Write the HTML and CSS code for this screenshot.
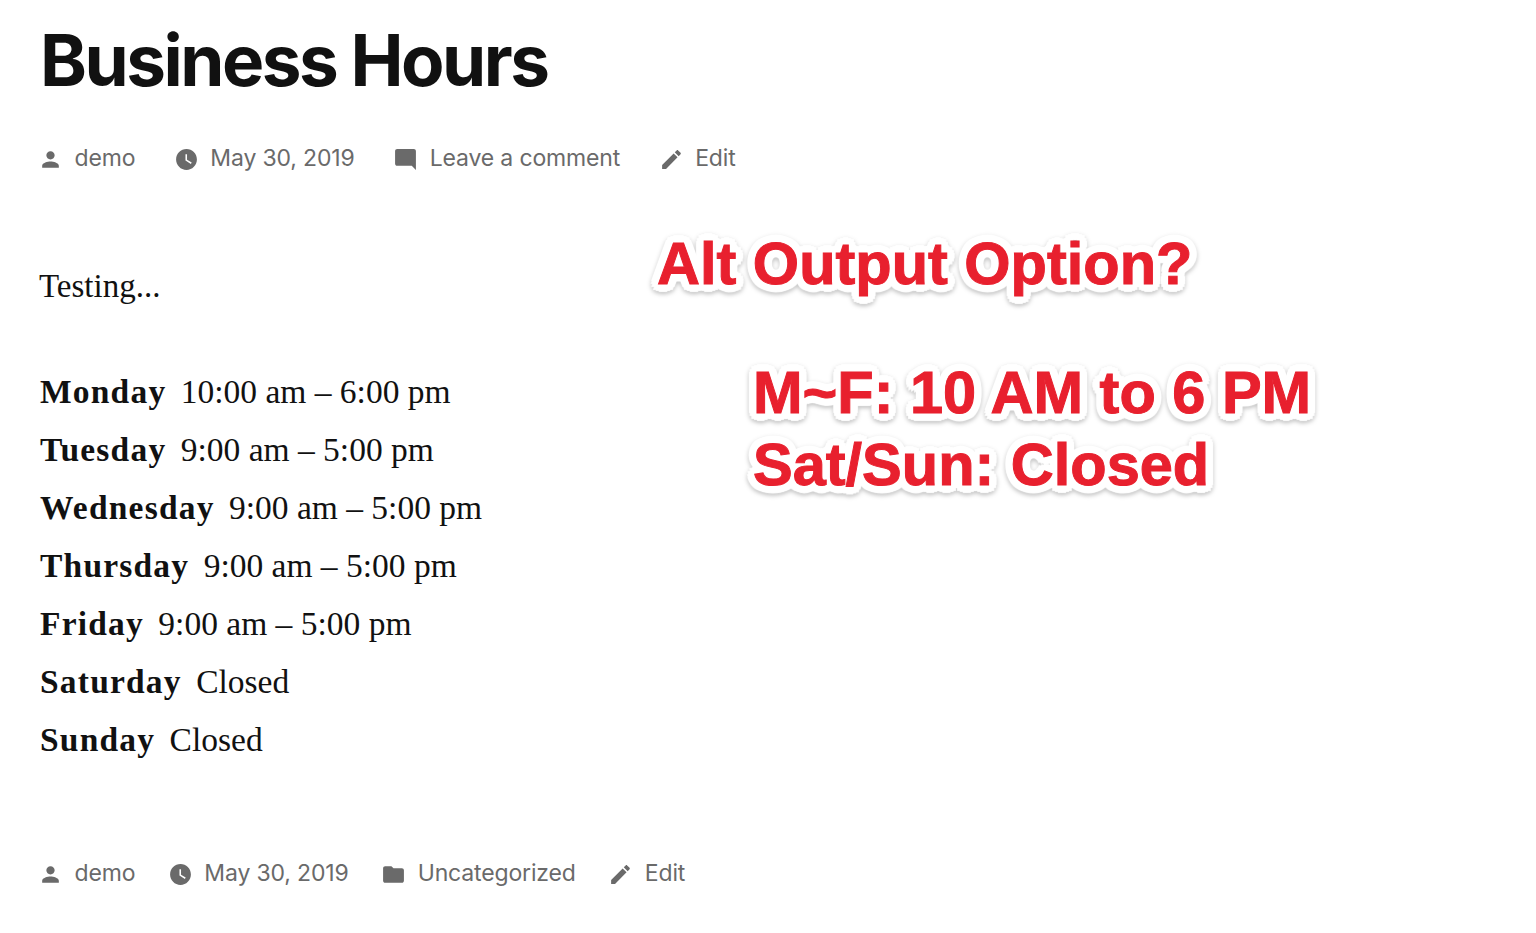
FILE: index.html
```html
<!DOCTYPE html>
<html lang="en">
<head>
    <meta charset="UTF-8">
    <meta name="viewport" content="width=device-width, initial-scale=1.0">
    <title>Business Hours</title>
    <link rel="stylesheet" href="styles.css">
</head>
<body>
    <article class="post">
        <h1 class="post-title">Business Hours</h1>

        <!-- Post meta -->
        <div class="meta meta-top">
            <span class="meta-item">
                <svg class="icon" viewBox="0 0 24 24"><path d="M12 12c2.21 0 4-1.79 4-4s-1.79-4-4-4-4 1.79-4 4 1.79 4 4 4zm0 2c-2.67 0-8 1.34-8 4v2h16v-2c0-2.66-5.33-4-8-4z"/></svg>
                demo
            </span>
            <span class="meta-item">
                <svg class="icon" viewBox="0 0 24 24"><path d="M12 2C6.5 2 2 6.5 2 12s4.5 10 10 10 10-4.5 10-10S17.5 2 12 2zm4.2 14.2L11 13V7h1.5v5.2l4.5 2.7-.8 1.3z"/></svg>
                May 30, 2019
            </span>
            <span class="meta-item">
                <svg class="icon" viewBox="0 0 24 24"><path d="M21.99 4c0-1.1-.89-2-1.99-2H4c-1.1 0-2 .9-2 2v12c0 1.1.9 2 2 2h14l4 4-.01-18z"/></svg>
                Leave a comment
            </span>
            <span class="meta-item">
                <svg class="icon" viewBox="0 0 24 24"><path d="M3 17.25V21h3.75L17.81 9.94l-3.75-3.75L3 17.25zM20.71 7.04c.39-.39.39-1.02 0-1.41l-2.34-2.34c-.39-.39-1.02-.39-1.41 0l-1.83 1.83 3.75 3.75 1.83-1.83z"/></svg>
                Edit
            </span>
        </div>

        <div class="post-content">
            <p class="intro">Testing...</p>
            <ul class="hours">
                <li><strong>Monday</strong> 10:00 am – 6:00 pm</li>
                <li><strong>Tuesday</strong> 9:00 am – 5:00 pm</li>
                <li><strong>Wednesday</strong> 9:00 am – 5:00 pm</li>
                <li><strong>Thursday</strong> 9:00 am – 5:00 pm</li>
                <li><strong>Friday</strong> 9:00 am – 5:00 pm</li>
                <li><strong>Saturday</strong> Closed</li>
                <li><strong>Sunday</strong> Closed</li>
            </ul>
        </div>

        <div class="meta meta-bottom">
            <span class="meta-item">
                <svg class="icon" viewBox="0 0 24 24"><path d="M12 12c2.21 0 4-1.79 4-4s-1.79-4-4-4-4 1.79-4 4 1.79 4 4 4zm0 2c-2.67 0-8 1.34-8 4v2h16v-2c0-2.66-5.33-4-8-4z"/></svg>
                demo
            </span>
            <span class="meta-item">
                <svg class="icon" viewBox="0 0 24 24"><path d="M12 2C6.5 2 2 6.5 2 12s4.5 10 10 10 10-4.5 10-10S17.5 2 12 2zm4.2 14.2L11 13V7h1.5v5.2l4.5 2.7-.8 1.3z"/></svg>
                May 30, 2019
            </span>
            <span class="meta-item">
                <svg class="icon" viewBox="0 0 24 24"><path d="M10 4H4c-1.1 0-1.99.9-1.99 2L2 18c0 1.1.9 2 2 2h16c1.1 0 2-.9 2-2V8c0-1.1-.9-2-2-2h-8l-2-2z"/></svg>
                Uncategorized
            </span>
            <span class="meta-item">
                <svg class="icon" viewBox="0 0 24 24"><path d="M3 17.25V21h3.75L17.81 9.94l-3.75-3.75L3 17.25zM20.71 7.04c.39-.39.39-1.02 0-1.41l-2.34-2.34c-.39-.39-1.02-.39-1.41 0l-1.83 1.83 3.75 3.75 1.83-1.83z"/></svg>
                Edit
            </span>
        </div>
    </article>

    <!-- Sticker notes pasted on top of the screenshot -->
    <div class="note note-question">Alt Output Option?</div>
    <div class="note note-answer">M~F: 10 AM to 6 PM<br>Sat/Sun: Closed</div>
</body>
</html>
```

FILE: styles.css
```css
/* Basic styling */
body {
    margin: 0;
    background-color: #fff;
    color: #111;
    font-family: 'Liberation Serif', serif;
}
.post {
    padding: 21px 0 0 38px;
}
.post-title {
    margin: 0 0 0 2px;
    font-family: Inter, sans-serif;
    font-size: 71px;
    line-height: 78px;
    font-weight: 700;
    letter-spacing: -2.5px;
    color: #111;
}

/* Meta rows */
.meta {
    display: flex;
    align-items: center;
    font-family: Inter, sans-serif;
    font-size: 23px;
    letter-spacing: -0.15px;
    line-height: 30px;
    color: #6a6a6a;
}
.meta-top {
    margin-top: 44px;
    gap: 38.5px;
}
.meta-bottom {
    margin-top: 89px;
    gap: 32.5px;
}
.meta-item {
    display: flex;
    align-items: center;
    gap: 11.5px;
}
.icon {
    width: 25px;
    height: 25px;
    fill: #6a6a6a;
    flex: none;
    margin-top: 2px;
}

/* Content */
.post-content {
    margin-left: 1px;
    font-size: 33.5px;
}
.intro {
    margin: 0;
    padding-top: 93px;
    line-height: 40px;
    font-size: 33px;
}
.hours {
    list-style: none;
    margin: 0;
    padding: 57px 0 0 1px;
}
.hours li {
    line-height: 58px;
}
.hours strong {
    margin-right: 6px;
    letter-spacing: 1.2px;
}

/* Sticker notes */
.note {
    position: absolute;
    font-family: 'Liberation Sans', sans-serif;
    font-weight: 700;
    font-size: 59.5px;
    color: #e8202e;
    -webkit-text-stroke: 1px #e8202e;
    text-shadow:
        8px 0 1px #fff, -8px 0 1px #fff, 0 8px 1px #fff, 0 -8px 1px #fff,
        5.7px 5.7px 1px #fff, -5.7px 5.7px 1px #fff, 5.7px -5.7px 1px #fff, -5.7px -5.7px 1px #fff,
        7.4px 3px 1px #fff, -7.4px 3px 1px #fff, 7.4px -3px 1px #fff, -7.4px -3px 1px #fff,
        3px 7.4px 1px #fff, -3px 7.4px 1px #fff, 3px -7.4px 1px #fff, -3px -7.4px 1px #fff;
    filter: drop-shadow(0 2px 2px rgba(0, 0, 0, 0.25));
}
.note-question {
    left: 657px;
    top: 230px;
    line-height: 68px;
}
.note-answer {
    left: 753px;
    top: 357px;
    line-height: 72px;
}
```
